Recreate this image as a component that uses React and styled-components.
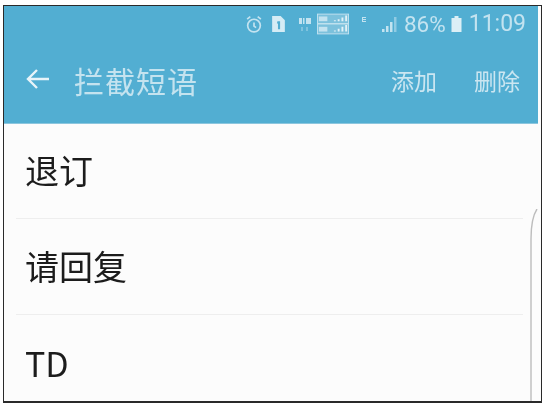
import React from "react";
import styled, { createGlobalStyle } from "styled-components";

const Global = createGlobalStyle`
  html, body { margin: 0; padding: 0; background: #fff; width: 547px; height: 409px; overflow: hidden; }
  #root { width: 547px; height: 409px; }
`;
const Page = styled.div`
  box-sizing: border-box;
  width: 547px;
  height: 409px;
  padding: 5px 5px 6px 3px;
`;
const Frame = styled.div`
  position: relative;
  box-sizing: border-box;
  height: 100%;
  border: 1px solid #2a2a2a;
  border-bottom-width: 2px;
  background: #fcfcfc;
  display: flex;
  flex-direction: column;
  overflow: hidden;
  font-family: "Noto Sans CJK SC", "Noto Sans", sans-serif;
`;
const Header = styled.header`
  height: 118px;
  margin-right: 3px;
  background: #52aed2;
  border-bottom: 1px solid #8cc6de;
  box-sizing: border-box;
  display: flex;
  flex-direction: column;
  flex: none;
`;
const StatusBar = styled.div`
  height: 36px;
  display: flex;
  align-items: center;
  justify-content: flex-end;
  padding: 0 12px 0 0;
  color: #c3e3f0;
  filter: blur(0.4px);
`;
const StatusGroup = styled.div`
  display: flex;
  align-items: center;
  margin-left: ${(p) => p.$gap}px;
`;
const StatusText = styled.span`
  font-family: "Roboto", "Liberation Sans", sans-serif;
  font-size: ${(p) => p.$size}px;
  line-height: 24px;
  margin-left: ${(p) => p.$gap || 0}px;
`;
const ActionBar = styled.div`
  flex: 1;
  display: flex;
  align-items: center;
  padding: 0 18px 6px 22px;
  filter: blur(0.4px);
`;
const Back = styled.svg`
  width: 24px;
  height: 24px;
  flex: none;
  margin-bottom: 2px;
`;
const Title = styled.h1`
  margin: 0 0 0 24px;
  font-size: 30px;
  line-height: 40px;
  font-weight: 400;
  letter-spacing: 1px;
  color: #c4e3ef;
  flex: 1;
`;
const Action = styled.button`
  background: none;
  border: 0;
  padding: 0;
  margin-left: 37px;
  font: inherit;
  font-size: 23px;
  line-height: 32px;
  color: #cbe6f1;
`;
const List = styled.ul`
  list-style: none;
  margin: -1px 0 0;
  padding: 0 18px 0 12px;
  flex: 1;
`;
const Row = styled.li`
  height: 96px;
  box-sizing: border-box;
  display: flex;
  align-items: center;
  padding: 0 0 1px 9px;
  font-size: 34px;
  line-height: 44px;
  color: #1c1c1c;
  border-bottom: ${(p) => (p.$last ? "0" : "1px solid #eeeeee")};
`;
const RowLabel = styled.span`
  filter: blur(0.35px);
`;
const Curve = styled.svg`
  position: absolute;
  right: 3px;
  bottom: 0;
  width: 8px;
  height: 192px;
`;

export default function App() {
  return (
    <Page>
      <Global />
      <Frame>
        <Header>
          <StatusBar>
            <StatusGroup $gap={0}>
              <svg width="18" height="19" viewBox="0 0 17 18" fill="none" stroke="#c3e3f0" strokeWidth="1.6">
                <circle cx="8.5" cy="10" r="6" />
                <path d="M8.5 7v3.5l2 1.5M2 4l3-2.5M15 4l-3-2.5" />
              </svg>
            </StatusGroup>
            <StatusGroup $gap={8}>
              <svg width="15" height="18" viewBox="0 0 14 17">
                <path d="M1 1h8l4 4v11H1z" fill="#d5ecf5" />
                <path d="M6 6h2.500v7.500H6.500V8H5.500z" fill="#52aed2" />
              </svg>
            </StatusGroup>
            <StatusGroup $gap={12}>
              <svg width="14" height="17" viewBox="0 0 14 17" fill="#c3e3f0">
                <rect x="1" y="2" width="3" height="6" />
                <rect x="5" y="2" width="1.5" height="6" />
                <rect x="8" y="2" width="5" height="6" />
                <rect x="3" y="11" width="2" height="4" opacity=".4" />
                <rect x="8" y="11" width="2" height="4" opacity=".4" />
              </svg>
            </StatusGroup>
            <StatusGroup $gap={5}>
              <svg width="32" height="22" viewBox="0 0 34 22">
                <rect x="0.5" y="0.5" width="33" height="21" fill="#7cc1dc" stroke="#c3e3f0" />
                <rect x="1" y="10" width="32" height="1.5" fill="#c3e3f0" />
                <rect x="2" y="3" width="9" height="5" fill="#c3e3f0" />
                <rect x="2" y="14" width="9" height="5" fill="#c3e3f0" />
                <path d="M18 7h2v1h-2zM22 6h2v2h-2zM26 4h2v4h-2zM30 2h2v6h-2zM18 18h2v1h-2zM22 16h2v3h-2zM26 14h2v5h-2zM30 12h2v7h-2z" fill="#e2f2f8" />
              </svg>
            </StatusGroup>
            <StatusGroup $gap={13}>
              <svg width="5" height="17" viewBox="0 0 5 17">
                <path d="M0 1h4v1H1v1h3v1H1v1h3v1H0z" fill="#c3e3f0" />
              </svg>
            </StatusGroup>
            <StatusGroup $gap={14}>
              <svg width="18" height="18" viewBox="0 0 18 18" fill="#c3e3f0">
                <path d="M1 14h2.500v3H1zM5 11h2.500v6H5zM9 7h2.500v10H9z" />
                <path d="M13 2h2.500v15H13z" opacity=".55" />
              </svg>
            </StatusGroup>
            <StatusText $size={22.5} $gap={5}>86%</StatusText>
            <StatusGroup $gap={4}>
              <svg width="13" height="18" viewBox="0 0 12 18">
                <path d="M4 1h4v2h3v14H1V3h3z" fill="#dceff6" />
              </svg>
            </StatusGroup>
            <StatusText $size={23} $gap={6}>11:09</StatusText>
          </StatusBar>
          <ActionBar>
            <Back viewBox="0 0 24 24" fill="none" stroke="#e8f4f9" strokeWidth="2.4">
              <path d="M23 12H2M11 3l-9 9 9 9" />
            </Back>
            <Title>拦截短语</Title>
            <Action>添加</Action>
            <Action>删除</Action>
          </ActionBar>
        </Header>
        <List>
          <Row><RowLabel>退订</RowLabel></Row>
          <Row><RowLabel>请回复</RowLabel></Row>
          <Row $last><RowLabel>TD</RowLabel></Row>
        </List>
        <Curve viewBox="0 0 8 192" fill="none" stroke="#bdbdbd" strokeWidth="1.4">
          <path d="M7 0C3 6 1 14 1 30V192" />
        </Curve>
      </Frame>
    </Page>
  );
}
